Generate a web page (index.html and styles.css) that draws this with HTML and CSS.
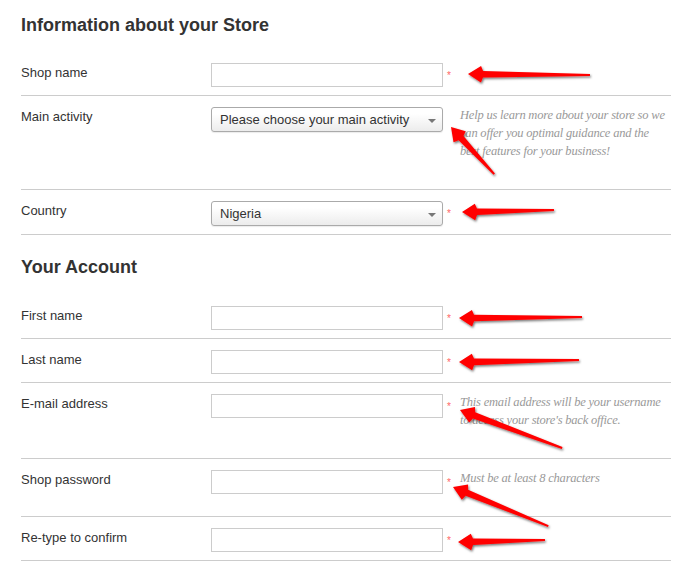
FILE: index.html
```html
<!DOCTYPE html>
<html lang="en">
<head>
  <meta charset="utf-8">
  <title>Create your store</title>
  <link rel="stylesheet" href="styles.css">
</head>
<body>
  <div class="page">
    <h2>Information about your Store</h2>
    <div class="row">
      <label class="label" for="shopName">Shop name</label>
      <input class="field" type="text" id="shopName">
      <span class="req">*</span>
    </div>
    <div class="row">
      <label class="label" for="activity">Main activity</label>
      <div class="select">
        <select class="field" id="activity">
          <option>Please choose your main activity</option>
          <option>Fashion and accessories</option>
          <option>Home and garden</option>
        </select>
      </div>
      <span class="req"></span>
      <p class="help">Help us learn more about your store so we can offer you optimal guidance and the best features for your business!</p>
    </div>
    <div class="row">
      <label class="label" for="country">Country</label>
      <div class="select">
        <select class="field" id="country">
          <option>Nigeria</option>
          <option>Ghana</option>
          <option>Kenya</option>
        </select>
      </div>
      <span class="req">*</span>
    </div>

    <h2 class="account">Your Account</h2>
    <div class="row">
      <label class="label" for="firstName">First name</label>
      <input class="field" type="text" id="firstName">
      <span class="req">*</span>
    </div>
    <div class="row">
      <label class="label" for="lastName">Last name</label>
      <input class="field" type="text" id="lastName">
      <span class="req">*</span>
    </div>
    <div class="row">
      <label class="label" for="email">E-mail address</label>
      <input class="field" type="text" id="email">
      <span class="req">*</span>
      <p class="help">This email address will be your username to access your store's back office.</p>
    </div>
    <div class="row">
      <label class="label" for="password">Shop password</label>
      <input class="field" type="password" id="password">
      <span class="req">*</span>
      <p class="help">Must be at least 8 characters</p>
    </div>
    <div class="row">
      <label class="label" for="confirm">Re-type to confirm</label>
      <input class="field" type="password" id="confirm">
      <span class="req">*</span>
    </div>
  </div>

  <!-- red arrows drawn over the form -->
  <svg class="arrows" width="681" height="577" viewBox="0 0 681 577">
    <defs>
      <filter id="shade" x="-20%" y="-50%" width="140%" height="200%">
        <feDropShadow dx="1" dy="1.5" stdDeviation="0.8" flood-color="#000" flood-opacity="0.55"/>
      </filter>
    </defs>
    <g class="arrow" filter="url(#shade)">
      <polygon transform="translate(468 74) rotate(0.5)" points="0,0 13,-8 15,-3.2 122,-1 122,1 15,3.4 13,8.5"/>
      <polygon transform="translate(451 127) rotate(47.5)" points="0,0 13,-8 15,-3.2 64,-1 64,1 15,3.4 13,8.5"/>
      <polygon transform="translate(462 212) rotate(-1.2)" points="0,0 13,-8 15,-3.2 92,-1 92,1 15,3.4 13,8.5"/>
      <polygon transform="translate(459 318) rotate(-0.5)" points="0,0 13,-8 15,-3.2 123,-1 123,1 15,3.4 13,8.5"/>
      <polygon transform="translate(459 362) rotate(-1)" points="0,0 13,-8 15,-3.2 120,-1 120,1 15,3.4 13,8.5"/>
      <polygon transform="translate(460 410) rotate(20.4)" points="0,0 13,-8 15,-3.2 109,-1 109,1 15,3.4 13,8.5"/>
      <polygon transform="translate(453 487) rotate(22.3)" points="0,0 13,-8 15,-3.2 103,-1 103,1 15,3.4 13,8.5"/>
      <polygon transform="translate(458 542) rotate(-1.3)" points="0,0 13,-8 15,-3.2 87,-1 87,1 15,3.4 13,8.5"/>
    </g>
  </svg>
</body>
</html>
```

FILE: styles.css
```css
body {
  margin: 0;
  background-color: #fff;
  font-family: "Liberation Sans", Arial, sans-serif;
  color: #333;
}
.page {
  width: 650px;
  padding: 14px 0 0 21px;
}
h2 {
  margin: 0 0 16px;
  font-size: 18px;
  line-height: 22px;
  font-weight: bold;
  color: #333;
}
h2.account {
  margin-top: 21px;
  margin-bottom: 17px;
}
.row {
  display: flex;
  align-items: flex-start;
  padding: 11px 0 8px;
  border-bottom: 1px solid #ccc;
}
.label {
  width: 190px;
  flex-shrink: 0;
  padding-top: 1px;
  font-size: 13px;
  line-height: 18px;
}
.field {
  width: 232px;
  height: 24px;
  flex-shrink: 0;
  box-sizing: border-box;
  margin: 0;
  padding: 0 8px;
  border: 1px solid #ccc;
  background: #fff;
  font-family: "Liberation Sans", Arial, sans-serif;
  font-size: 13px;
  color: #333;
}
.select {
  position: relative;
  width: 232px;
  flex-shrink: 0;
}
.select .field {
  height: 25px;
  border: 1px solid #aaa;
  border-radius: 3px;
  background: linear-gradient(#fff 25%, #ececec);
  box-shadow: 0 1px 1px rgba(0, 0, 0, 0.08);
  -webkit-appearance: none;
  appearance: none;
}
.select::after {
  content: "";
  position: absolute;
  right: 7px;
  top: 12px;
  border-left: 4px solid transparent;
  border-right: 4px solid transparent;
  border-top: 4px solid #777;
}
.req {
  width: 17px;
  flex-shrink: 0;
  box-sizing: border-box;
  padding: 7px 0 0 4px;
  font-size: 10px;
  line-height: 12px;
  color: #f66;
}
.help {
  flex: 1;
  margin: -1px 0 0;
  padding-bottom: 21px;
  font-family: "Liberation Serif", Georgia, serif;
  font-style: italic;
  font-size: 12.5px;
  letter-spacing: -0.2px;
  line-height: 18px;
  color: #999;
}
.arrows {
  position: absolute;
  top: 0;
  left: 0;
  pointer-events: none;
}
.arrow polygon {
  fill: #f00;
}
```
